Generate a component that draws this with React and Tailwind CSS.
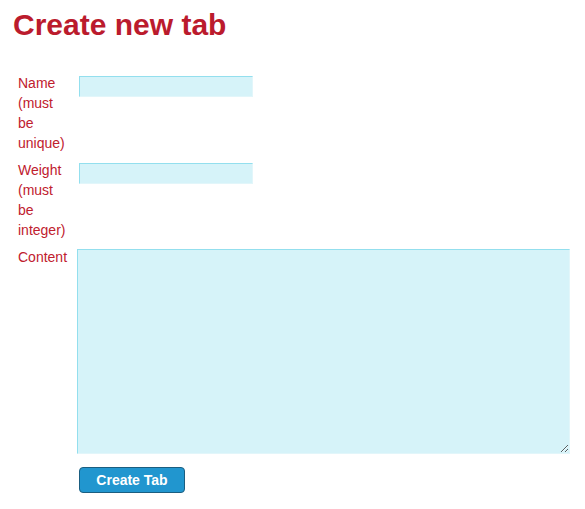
import React from 'react';

const inputCls =
  'block bg-[#d6f3f9] border border-t-[#93dfee] border-l-[#93dfee] border-r-[#e2f6fa] border-b-[#e2f6fa] outline-none';

const App = () => {
  return (
    <div className="min-h-screen bg-white pl-[13px] pt-[7px] font-['Liberation_Sans',Arial,sans-serif]">
      <h1 className="text-[30px] leading-[36px] font-bold text-[#bb1b2d]">Create new tab</h1>

      <form className="mt-[30px] pl-[5px] grid grid-cols-[49px_auto] gap-x-[10px] gap-y-[7px] text-[14px] leading-[20px] text-[#c0202e]">
        <label htmlFor="name">Name (must be unique)</label>
        <div>
          <input id="name" type="text" className={`${inputCls} mt-[3px] ml-[2px] w-[174px] h-[21px]`} />
        </div>

        <label htmlFor="weight">Weight (must be integer)</label>
        <div>
          <input id="weight" type="text" className={`${inputCls} mt-[3px] ml-[2px] w-[174px] h-[21px]`} />
        </div>

        <label htmlFor="content">Content</label>
        <div>
          <textarea id="content" className={`${inputCls} mt-[2px] w-[493px] h-[205px]`} />
        </div>

        <div />
        <div>
          <button
            type="button"
            className="mt-[6px] ml-[2px] w-[106px] h-[26px] rounded-[4px] bg-[#2196cf] border border-[#1b5e80] text-white font-bold text-[14px] leading-none"
          >
            Create Tab
          </button>
        </div>
      </form>
    </div>
  );
};

export default App;
